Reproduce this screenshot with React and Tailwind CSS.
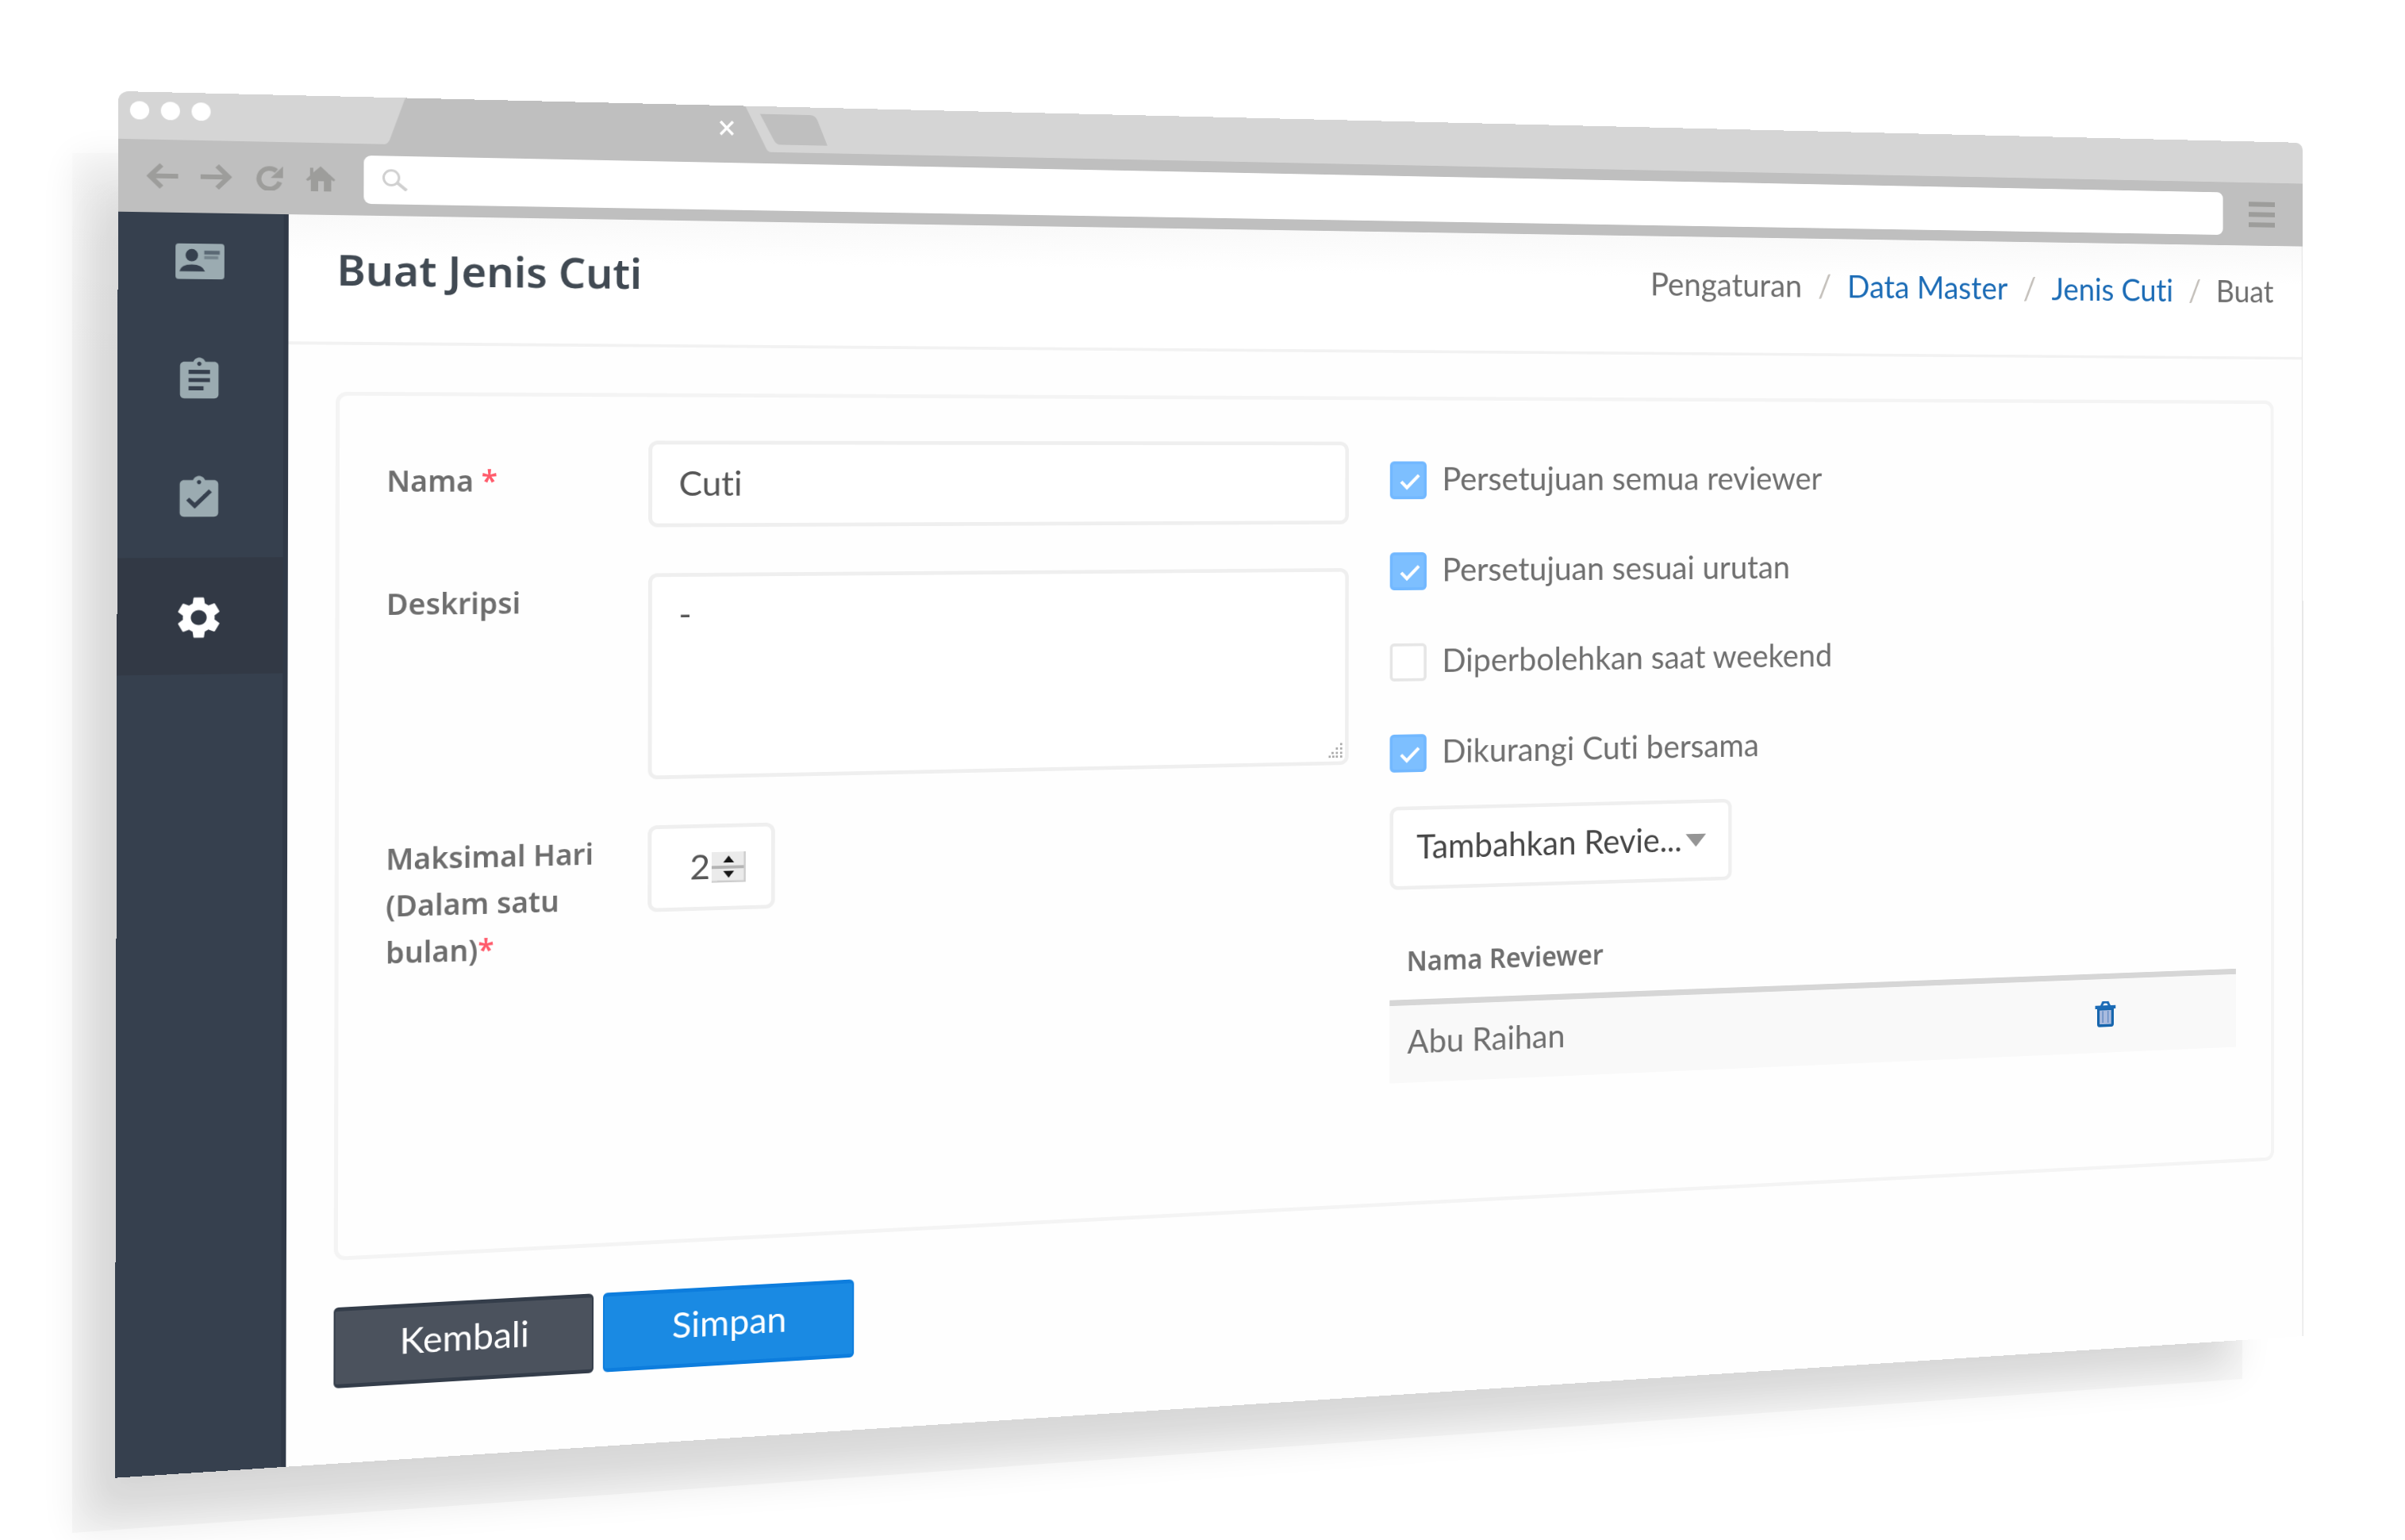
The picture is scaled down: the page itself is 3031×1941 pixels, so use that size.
import React, { useLayoutEffect, useRef, useState } from "react";
import { MdAssignment, MdAssignmentTurnedIn, MdSettings } from "react-icons/md";

/* Where the four corners of the tilted window sit, as fractions of the stage. */
const CORNERS = [
  [0.0492, 0.0592],
  [0.9574, 0.0927],
  [0.9578, 0.8676],
  [0.0478, 0.9598],
];

function perspectiveMatrix(w, h, stageW, stageH) {
  const [[x0, y0], [x1, y1], [x2, y2], [x3, y3]] = CORNERS.map(([x, y]) => [x * stageW, y * stageH]);
  const dx1 = x1 - x2;
  const dx2 = x3 - x2;
  const dx3 = x0 - x1 + x2 - x3;
  const dy1 = y1 - y2;
  const dy2 = y3 - y2;
  const dy3 = y0 - y1 + y2 - y3;
  const det = dx1 * dy2 - dx2 * dy1;
  const g = (dx3 * dy2 - dx2 * dy3) / det;
  const k = (dx1 * dy3 - dx3 * dy1) / det;
  const a = (x1 - x0 + g * x1) / w;
  const d = (y1 - y0 + g * y1) / w;
  const b = (x3 - x0 + k * x3) / h;
  const e = (y3 - y0 + k * y3) / h;
  return `matrix3d(${[a, d, 0, g / w, b, e, 0, k / h, 0, 0, 1, 0, x0, y0, 0, 1].join(",")})`;
}

function TiltedStage({ children }) {
  const stage = useRef(null);
  const pane = useRef(null);
  const [transform, setTransform] = useState("none");

  useLayoutEffect(() => {
    const update = () =>
      setTransform(
        perspectiveMatrix(
          pane.current.offsetWidth,
          pane.current.offsetHeight,
          stage.current.clientWidth,
          stage.current.clientHeight
        )
      );
    update();
    const observer = new ResizeObserver(update);
    observer.observe(stage.current);
    observer.observe(pane.current);
    return () => observer.disconnect();
  }, []);

  return (
    <div
      ref={stage}
      className="relative h-screen w-full overflow-hidden bg-white font-['Lato','Noto_Sans',sans-serif] [font-variant-ligatures:none]"
    >
      <WindowShadow />
      <div ref={pane} className="relative flex min-h-[90vh] w-full origin-top-left flex-col" style={{ transform }}>
        {children}
      </div>
    </div>
  );
}

function WindowShadow() {
  return (
    <svg
      className="absolute inset-0 h-full w-full"
      viewBox="0 0 3031 1941"
      preserveAspectRatio="none"
      aria-hidden="true"
    >
      <defs>
        <filter id="soft" x="-10%" y="-10%" width="120%" height="120%">
          <feGaussianBlur stdDeviation="24" />
        </filter>
        <linearGradient id="rise" x1="0" y1="0" x2="0" y2="1">
          <stop offset="0" stopColor="#000" stopOpacity="0.4" />
          <stop offset="0.15" stopColor="#000" stopOpacity="1" />
        </linearGradient>
        <clipPath id="cast">
          <polygon points="91,193 2826,193 2826,1738 91,1932" />
        </clipPath>
      </defs>
      <polygon points="96,200 2820,260 2820,1730 96,1932" fill="#000" opacity="0.08" filter="url(#soft)" />
      <g clipPath="url(#cast)">
        <rect x="91" y="193" width="2735" height="1748" fill="url(#rise)" opacity="0.03" />
        <polygon points="125,260 2796,230 2796,1710 125,1895" fill="#000" opacity="0.06" filter="url(#soft)" />
      </g>
    </svg>
  );
}

function TabStrip() {
  return (
    <div className="flex h-[60px] items-start overflow-hidden rounded-t-[12px] bg-[#d5d5d5]">
      <div className="flex w-[324px] gap-[14px] pt-[12px] pl-[14px]">
        <span className="size-[23px] rounded-full bg-white" />
        <span className="size-[23px] rounded-full bg-white" />
        <span className="size-[23px] rounded-full bg-white" />
      </div>
      <svg className="h-[60px] w-[563px]" viewBox="0 0 563 60" aria-hidden="true">
        <path d="M0 60Q4 59 6 54L24 3Q25 0 28 0H456L483 55Q485 60 490 60Z" fill="#bfbfbf" />
        <path d="M475 10H540Q547 10 550 17L563 50H502Q496 50 493 44Z" fill="#bfbfbf" />
        <path d="M424 21L440 38M440 21L424 38" stroke="#fff" strokeWidth="3.5" />
      </svg>
    </div>
  );
}

function Toolbar() {
  return (
    <div className="flex h-[92px] items-center bg-[#bfbfbf] pr-[45px] pl-[34px] text-[#9d9d9b]">
      <div className="flex w-[264px] gap-[27px]">
        <button type="button" aria-label="Mundur">
          <svg className="h-[32px] w-[38px]" viewBox="0 0 38 32" fill="none" stroke="currentColor" strokeWidth="6">
            <path d="M38 16H5M18 2L4 16L18 30" />
          </svg>
        </button>
        <button type="button" aria-label="Maju">
          <svg className="h-[32px] w-[38px]" viewBox="0 0 38 32" fill="none" stroke="currentColor" strokeWidth="6">
            <path d="M0 16H33M20 2L34 16L20 30" />
          </svg>
        </button>
        <button type="button" aria-label="Muat ulang">
          <svg className="h-[32px] w-[36px]" viewBox="0 0 36 32">
            <path d="M31 21A13 13 0 1 1 27 7" fill="none" stroke="currentColor" strokeWidth="6" />
            <path d="M35 1V16H20Z" fill="currentColor" />
          </svg>
        </button>
        <button type="button" aria-label="Beranda">
          <svg className="h-[32px] w-[36px]" viewBox="0 0 36 32" fill="currentColor">
            <path d="M18 0L36 17L34 19L31 17V32H22V19H15V32H6V17L2 19L0 17L5 12V2H9V8Z" />
          </svg>
        </button>
      </div>
      <label className="flex h-[62px] grow items-center rounded-[9px] bg-white pl-[23px]">
        <svg className="h-[28px] w-[32px]" viewBox="0 0 32 28" fill="none" stroke="#d0d0d0" strokeWidth="3">
          <circle cx="11" cy="11" r="9.500" />
          <path d="M18 17L30 27" strokeWidth="4" />
        </svg>
        <input type="text" aria-label="Alamat" className="h-full grow bg-transparent pl-4 text-[32px] outline-none" />
      </label>
      <button type="button" aria-label="Menu" className="ml-[41px] flex w-[42px] flex-col gap-[8px]">
        <span className="h-[7px] w-full bg-[#9d9d9b]" />
        <span className="h-[7px] w-full bg-[#9d9d9b]" />
        <span className="h-[7px] w-full bg-[#9d9d9b]" />
      </button>
    </div>
  );
}

function IdCardIcon() {
  return (
    <svg className="h-[45px] w-[59px]" viewBox="0 0 63 46" preserveAspectRatio="none" aria-hidden="true">
      <rect width="63" height="46" rx="4" fill="#9babb1" />
      <circle cx="21" cy="15" r="8" fill="#36404e" />
      <path d="M5 36Q7 27 21 27Q35 27 38 36Z" fill="#36404e" />
      <rect x="37" y="9" width="20" height="5" fill="#5a6874" />
      <rect x="37" y="16" width="18" height="4" fill="#74838c" />
    </svg>
  );
}

function Sidebar() {
  return (
    <nav className="w-[206px] shrink-0 border-r-[6px] border-[#303947] bg-[#36404e] text-[#9babb1]">
      <a href="#kartu" aria-label="Data karyawan" className="flex h-[137px] items-center justify-center pr-[4px] pb-[14px]">
        <IdCardIcon />
      </a>
      <a href="#tugas" aria-label="Laporan" className="flex h-[150px] items-center justify-center pr-[4px]">
        <MdAssignment className="size-[62px]" />
      </a>
      <a href="#persetujuan" aria-label="Persetujuan" className="flex h-[150px] items-center justify-center pr-[4px]">
        <MdAssignmentTurnedIn className="size-[62px]" />
      </a>
      <a
        href="#pengaturan"
        aria-label="Pengaturan"
        className="flex h-[148px] items-center justify-center bg-[#323945] pt-[4px] pr-[4px] text-white"
      >
        <MdSettings className="size-[64px]" />
      </a>
    </nav>
  );
}

function PageHeader() {
  return (
    <header className="flex h-[166px] items-start justify-between border-b-[4px] border-[#f2f2f2] bg-linear-to-b from-[#f9f9f9] to-white to-35% pt-[33px] pr-[45px] pl-[59px]">
      <h1 className="font-['Noto_Sans',sans-serif] text-[54px] leading-[72px] font-semibold text-[#414a53]">Buat Jenis Cuti</h1>
      <nav aria-label="Breadcrumb" className="text-[45px] leading-[66px] text-[#6f6f6f]">
        <ol className="flex">
          <li>Pengaturan</li>
          <li className="w-[68px] text-center text-[#c4c0bb]">/</li>
          <li>
            <a href="#data-master" className="text-[#1c6cb6]">Data Master</a>
          </li>
          <li className="w-[68px] text-center text-[#c4c0bb]">/</li>
          <li>
            <a href="#jenis-cuti" className="text-[#1c6cb6]">Jenis Cuti</a>
          </li>
          <li className="w-[68px] text-center text-[#c4c0bb]">/</li>
          <li>Buat</li>
        </ol>
      </nav>
    </header>
  );
}

function LeaveFields() {
  return (
    <div className="grid grid-cols-[329px_1fr] content-start gap-y-[60px] pl-[2px] font-['Noto_Sans',sans-serif] text-[37px] leading-[60px] font-semibold text-[#6e6e6e]">
      <label htmlFor="nama" className="pt-[22px]">
        Nama <span className="text-[#ff5b6b]">*</span>
      </label>
      <input
        id="nama"
        type="text"
        defaultValue="Cuti"
        className="h-[113px] w-full rounded-[12px] border-[5px] border-[#efefef] bg-white px-[34px] pb-[4px] font-['Lato',sans-serif] text-[45px] font-normal text-[#565656] outline-none"
      />
      <label htmlFor="deskripsi" className="pt-[7px]">Deskripsi</label>
      <div className="relative h-[269px]">
        <textarea
          id="deskripsi"
          defaultValue="-"
          className="block h-full w-full resize-none rounded-[12px] border-[5px] border-[#efefef] bg-white px-[34px] py-[18px] font-['Lato',sans-serif] text-[45px] leading-[60px] font-normal text-[#565656] outline-none"
        />
        <svg className="absolute right-[8px] bottom-[10px] size-[20px]" viewBox="0 0 20 20" fill="#aaa" aria-hidden="true">
          <path d="M16 0h3v3h-3zM10 6h3v3h-3zM16 6h3v3h-3zM4 12h3v3h-3zM10 12h3v3h-3zM16 12h3v3h-3zM0 17h3v3h-3zM5 17h3v3h-3zM10 17h3v3h-3zM16 17h3v3h-3z" />
        </svg>
      </div>
      <label htmlFor="maksimal" className="pt-[5px] pr-[40px]">
        Maksimal Hari (Dalam satu bulan)<span className="text-[#ff5b6b]">*</span>
      </label>
      <div className="flex h-[113px] w-[164px] items-center rounded-[12px] border-[5px] border-[#efefef] bg-white pr-[33px]">
        <input
          id="maksimal"
          type="number"
          defaultValue="2"
          className="w-full min-w-0 [appearance:textfield] bg-transparent pr-[2px] pb-[4px] text-right font-['Lato',sans-serif] text-[45px] font-normal text-[#565656] outline-none [&::-webkit-inner-spin-button]:appearance-none"
        />
        <svg className="h-[40px] w-[44px] shrink-0" viewBox="0 0 44 40" aria-hidden="true">
          <rect width="44" height="40" fill="#ebebeb" />
          <path d="M0 20H44" stroke="#b4b4b4" strokeWidth="4" />
          <path d="M0 39H44M43 0V40" stroke="#cdcdcd" strokeWidth="3" />
          <path d="M22 5L29 14H15ZM22 34L29 25H15Z" fill="#161616" />
        </svg>
      </div>
    </div>
  );
}

const OPTIONS = [
  { id: "semua", label: "Persetujuan semua reviewer", checked: true },
  { id: "urutan", label: "Persetujuan sesuai urutan", checked: true },
  { id: "weekend", label: "Diperbolehkan saat weekend", checked: false },
  { id: "bersama", label: "Dikurangi Cuti bersama", checked: true },
];

function OptionRow({ id, label, checked }) {
  return (
    <div className="flex h-[52px] items-center gap-[22px]">
      <span className="relative size-[52px]">
        <input
          id={id}
          type="checkbox"
          defaultChecked={checked}
          className="peer block size-[52px] appearance-none rounded-[6px] border-[4px] border-[#e6e6e6] bg-white checked:border-[#72b8ff] checked:bg-[#7dbfff]"
        />
        <svg
          className="pointer-events-none absolute inset-0 hidden size-[52px] peer-checked:block"
          viewBox="0 0 52 52"
          fill="none"
          stroke="#fff"
          strokeWidth="4.500"
          aria-hidden="true"
        >
          <path d="M16 28L24 36L41 19" />
        </svg>
      </span>
      <label htmlFor={id} className="pb-[7px]">{label}</label>
    </div>
  );
}

function ReviewerSettings() {
  return (
    <div className="pt-[27px] text-[45px] leading-[60px] text-[#6f6f6f]">
      <div className="flex flex-col gap-[73px]">
        {OPTIONS.map((option) => (
          <OptionRow key={option.id} {...option} />
        ))}
      </div>
      <div className="relative mt-[47px] w-[495px]">
        <select
          aria-label="Tambahkan Reviewer"
          className="h-[114px] w-full appearance-none rounded-[12px] border-[5px] border-[#efefef] bg-white pb-[4px] pl-[33px] text-[46px] text-[#474747] outline-none"
        >
          <option>Tambahkan Revie...</option>
        </select>
        <svg className="pointer-events-none absolute top-[48px] right-[38px] h-[18px] w-[30px]" viewBox="0 0 30 18" aria-hidden="true">
          <path d="M0 0H30L15 18Z" fill="#959595" />
        </svg>
      </div>
      <table className="mt-[68px] w-full border-collapse">
        <thead>
          <tr className="border-b-[8px] border-[#d6d6d6] text-left font-['Noto_Sans',sans-serif] text-[37px]">
            <th scope="col" className="pb-[23px] pl-[24px] font-semibold">Nama Reviewer</th>
            <th scope="col" aria-label="Aksi" className="w-[230px]" />
          </tr>
        </thead>
        <tbody>
          <tr className="h-[110px] border-t-[8px] border-[#d6d6d6] bg-[#f9f9f9]">
            <td className="pb-[8px] pl-[25px]">Abu Raihan</td>
            <td>
              <button type="button" aria-label="Hapus Abu Raihan" className="block pb-[7px] pl-[8px]">
                <svg className="h-[38px] w-[32px]" viewBox="0 0 32 38">
                  <path d="M5 12H27V34Q27 36 25 36H7Q5 36 5 34Z" fill="#a9bbdf" stroke="#1766ad" strokeWidth="4" />
                  <path d="M0 7H8L11 1H21L24 7H32V12H0ZM12 7H20L18 4H14Z" fill="#1c6cb6" fillRule="evenodd" />
                  <path d="M12 15V32M20 15V32" stroke="#6a8fc6" strokeWidth="2" />
                </svg>
              </button>
            </td>
          </tr>
        </tbody>
      </table>
    </div>
  );
}

export default function App() {
  return (
    <TiltedStage>
      <TabStrip />
      <Toolbar />
      <div className="flex grow bg-white">
        <Sidebar />
        <main className="flex grow flex-col border-r-[2px] border-[#e8e8e8] bg-[#fefefe]">
          <PageHeader />
          <form className="flex grow flex-col pt-[60px] pr-[45px] pb-[96px] pl-[58px]" onSubmit={(e) => e.preventDefault()}>
            <section className="grid grow grid-cols-2 gap-x-[58px] rounded-[14px] border-[5px] border-[#f4f4f4] p-[56px] pt-[57px]">
              <LeaveFields />
              <ReviewerSettings />
            </section>
            <div className="mt-[60px] flex gap-[12px] text-[46px] leading-[60px] text-white">
              <button
                type="button"
                className="h-[103px] w-[324px] rounded-[6px] border-x-[2px] border-y-[5px] border-[#343d4a] bg-[#4b525d] pb-[8px]"
              >
                Kembali
              </button>
              <button
                type="submit"
                className="h-[103px] w-[324px] rounded-[6px] border-x-[2px] border-y-[5px] border-[#0d7ddd] bg-[#1a8ae3] pb-[8px]"
              >
                Simpan
              </button>
            </div>
          </form>
        </main>
      </div>
    </TiltedStage>
  );
}
